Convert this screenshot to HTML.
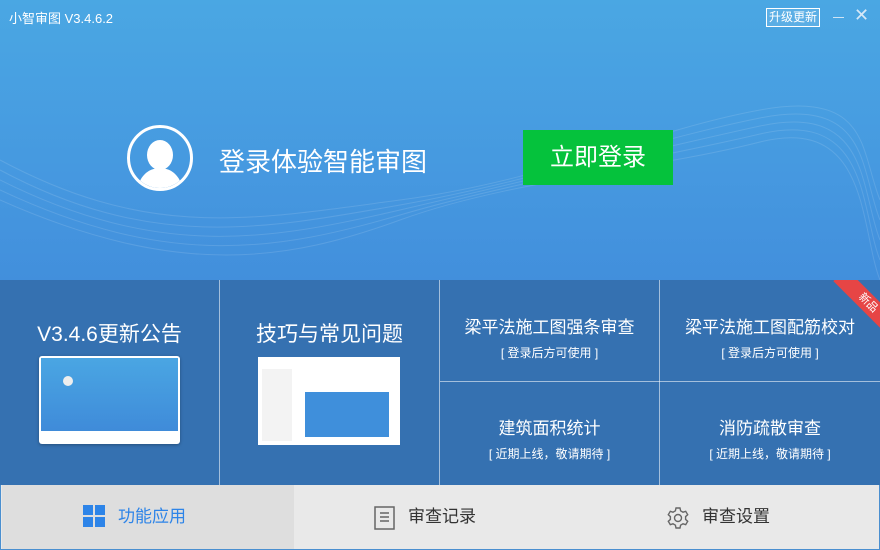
<!DOCTYPE html>
<html><head><meta charset="utf-8"><style>
*{margin:0;padding:0;box-sizing:border-box}
body{width:880px;height:550px;overflow:hidden;font-family:"Liberation Sans","Noto Sans CJK SC","Microsoft YaHei",sans-serif;position:relative;background:#3570b0}
.top{position:absolute;left:0;top:0;width:880px;height:280px;background:linear-gradient(180deg,#4aa7e3 0%,#4699e0 60%,#428fdc 100%);overflow:hidden}
.title{position:absolute;left:9px;top:8px;color:#fff;font-size:13px}
.upd{position:absolute;left:766px;top:8px;width:54px;height:19px;border:1px solid #fff;color:#fff;font-size:12px;text-align:center;line-height:17px;background:rgba(255,255,255,.1)}
.min{position:absolute;left:833px;top:17px;width:11px;height:1px;background:#cfe4f5}
.x{position:absolute;left:854px;top:5px;color:#d6e8f7;font-size:18px;font-weight:300}
.avatar{position:absolute;left:127px;top:125px;width:66px;height:66px;border:3px solid #fff;border-radius:50%;overflow:hidden}
.head{position:absolute;left:17px;top:12px;width:26px;height:30px;background:#fff;border-radius:50%}
.body{position:absolute;left:8px;top:40px;width:44px;height:30px;background:#fff;border-radius:22px 22px 0 0}
.lt{position:absolute;left:219px;top:142px;color:#fff;font-size:26px}
.btn{position:absolute;left:523px;top:130px;width:150px;height:55px;background:#05c23c;color:#fff;font-size:24px;text-align:center;line-height:55px}
.grid{position:absolute;top:280px;left:0;width:880px;height:205px;background:#3571b1}
.cell{position:absolute;color:#fff;text-align:center}
.vl{position:absolute;top:0;width:1px;height:205px;background:rgba(255,255,255,.55)}
.big{font-size:21px}
.sm{font-size:12px;margin-top:6px}
.tabs{position:absolute;top:485px;left:0;width:880px;height:65px;background:#e9e9e9;border:1px solid #4a8fd0;border-top:none}
.tab{position:absolute;top:0;height:64px;line-height:64px;font-size:17px;color:#333}
</style></head><body>
<div class="top">
<svg width="880" height="280" style="position:absolute;left:0;top:0" fill="none" stroke="rgba(255,255,255,.12)" stroke-width="1">
<path d="M0 160 C150 240 250 220 400 200 S650 130 760 110 S860 150 880 200"/>
<path d="M0 170 C150 250 260 230 400 205 S650 140 760 118 S860 170 880 220"/>
<path d="M0 180 C160 260 270 240 400 210 S650 150 760 126 S860 190 880 240"/>
<path d="M0 190 C170 270 280 250 400 215 S650 160 760 134 S860 210 880 260"/>
<path d="M0 200 C180 280 290 260 400 220 S650 170 760 142 S860 230 880 280"/>
</svg>
<div class="title">小智审图 V3.4.6.2</div>
<div class="upd">升级更新</div>
<div class="min"></div>
<div class="x">✕</div>
<div class="avatar"><div class="head"></div><div class="body"></div></div>
<div class="lt">登录体验智能审图</div>
<div class="btn">立即登录</div>
</div>
<div class="grid">
<div class="vl" style="left:219px"></div>
<div class="vl" style="left:439px"></div>
<div class="vl" style="left:659px"></div>
<div style="position:absolute;left:440px;top:101px;width:440px;height:1px;background:rgba(255,255,255,.55)"></div>
<div class="cell big" style="left:0;width:219px;top:38px">V3.4.6更新公告</div>
<div style="position:absolute;left:39px;top:76px;width:141px;height:88px;background:#fff;border-radius:3px;overflow:hidden;box-shadow:0 1px 3px rgba(0,0,0,.3)">
<div style="height:73px;margin:2px 2px 0;background:linear-gradient(#4aa6e3,#3f8bd9)"></div>
<div style="position:absolute;left:24px;top:20px;width:10px;height:10px;border-radius:50%;background:#eee"></div>
</div>
<div class="cell big" style="left:220px;width:219px;top:38px">技巧与常见问题</div>
<div style="position:absolute;left:258px;top:77px;width:142px;height:88px;background:#fff">
<div style="position:absolute;left:47px;top:35px;width:84px;height:45px;background:#3f8fdb"></div>
<div style="position:absolute;left:4px;top:12px;width:30px;height:72px;background:#f3f3f3"></div>
</div>
<div class="cell" style="left:440px;width:219px;top:33px"><div style="font-size:17px">梁平法施工图强条审查</div><div class="sm">[ 登录后方可使用 ]</div></div>
<div class="cell" style="left:660px;width:220px;top:33px"><div style="font-size:17px">梁平法施工图配筋校对</div><div class="sm">[ 登录后方可使用 ]</div></div>
<div class="cell" style="left:440px;width:219px;top:134px"><div style="font-size:17px">建筑面积统计</div><div class="sm">[ 近期上线，敬请期待 ]</div></div>
<div class="cell" style="left:660px;width:220px;top:134px"><div style="font-size:17px">消防疏散审查</div><div class="sm">[ 近期上线，敬请期待 ]</div></div>
<div style="position:absolute;left:820px;top:0;width:60px;height:60px;overflow:hidden">
<div style="position:absolute;left:8px;top:14px;width:80px;height:18px;background:#e64545;transform:rotate(45deg);color:#fff;font-size:11px;text-align:center;line-height:18px;transform-origin:center">新品</div>
</div>
</div>
<div class="tabs">
<div style="position:absolute;left:1px;top:0;width:292px;height:64px;background:#dedede"></div>
<div style="position:absolute;left:82px;top:20px;width:22px;height:22px">
<div style="position:absolute;left:0;top:0;width:10px;height:10px;background:#2d84e8"></div>
<div style="position:absolute;left:12px;top:0;width:10px;height:10px;background:#2d84e8"></div>
<div style="position:absolute;left:0;top:12px;width:10px;height:10px;background:#2d84e8"></div>
<div style="position:absolute;left:12px;top:12px;width:10px;height:10px;background:#2d84e8"></div>
</div>
<div class="tab" style="left:117px;color:#2d84e8">功能应用</div>
<svg style="position:absolute;left:373px;top:21px" width="22" height="24" fill="none" stroke="#666" stroke-width="1.5"><rect x="1" y="1" width="19" height="22"/><path d="M6 7h9M6 11h9M6 15h9"/></svg>
<div class="tab" style="left:407px">审查记录</div>
<svg style="position:absolute;left:665px;top:21px" width="24" height="24" viewBox="0 0 24 24" fill="none" stroke="#666" stroke-width="1.4"><circle cx="12" cy="12" r="3.5"/><path d="M10 2h4l.6 2.8 2.4 1.4 2.7-.9 2 3.4-2.1 1.9v2.8l2.1 1.9-2 3.4-2.7-.9-2.4 1.4L14 22h-4l-.6-2.8-2.4-1.4-2.7.9-2-3.4 2.1-1.9v-2.8L2.3 8.7l2-3.4 2.7.9 2.4-1.4z"/></svg>
<div class="tab" style="left:701px">审查设置</div>
</div>
</body></html>
